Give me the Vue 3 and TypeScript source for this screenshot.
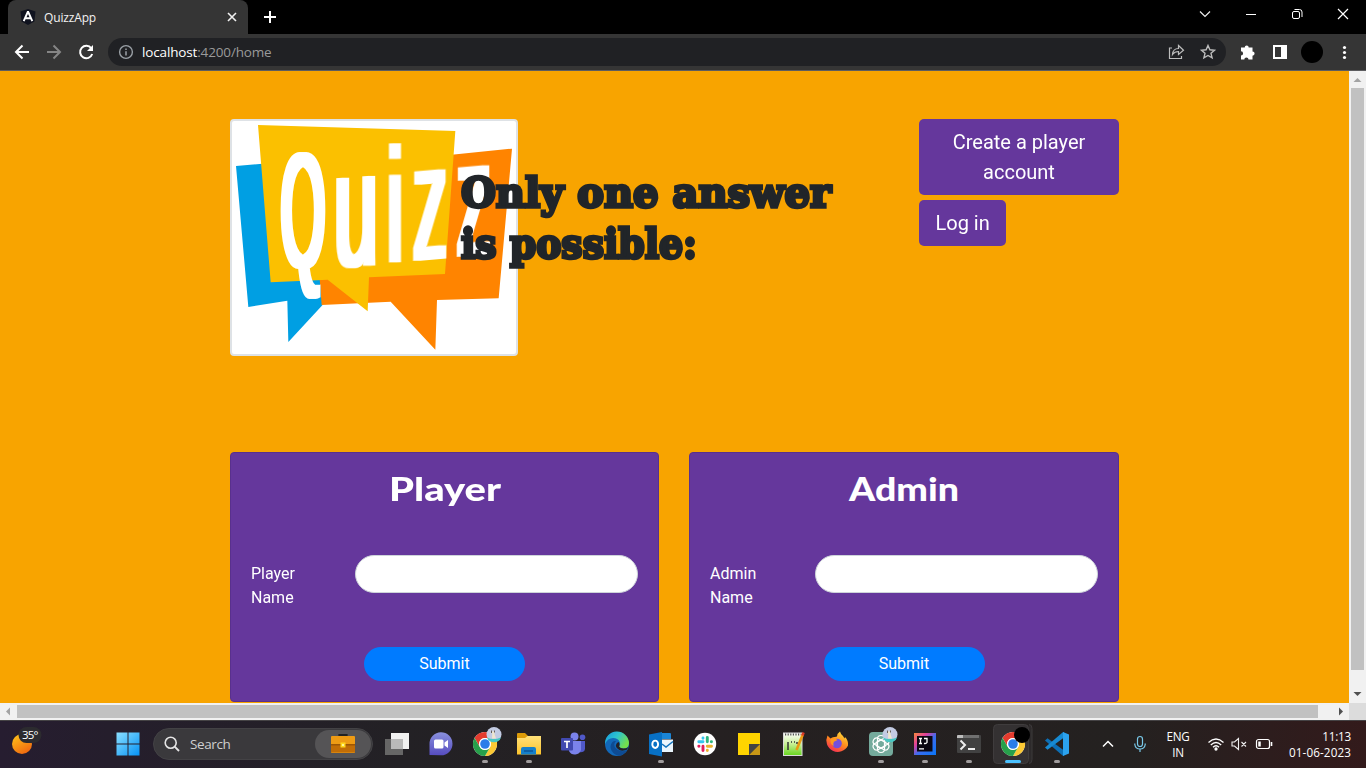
<script setup lang="ts">
interface LoginForm {
  title: string
  width: number
  label: string
}

interface LogoLetter {
  char: string
  x: number
  y: number
  size: number
  scale: number
  skew: number
}

const forms: LoginForm[] = [
  { title: 'Player', width: 112, label: 'Player Name' },
  { title: 'Admin', width: 110, label: 'Admin Name' },
]

const letters: LogoLetter[] = [
  { char: 'Q', x: 234, y: 466, size: 492, scale: 0.345, skew: 0 },
  { char: 'u', x: 393, y: 459, size: 498, scale: 0.47, skew: -4 },
  { char: 'i', x: 510, y: 449, size: 486, scale: 0.42, skew: -2 },
  { char: 'z', x: 615, y: 439, size: 496, scale: 0.4, skew: -5 },
  { char: 'z', x: 746, y: 427, size: 496, scale: 0.4, skew: -5 },
]

const headline = [
  { text: 'Only one answer', width: 370, y: 46.5 },
  { text: 'is possible:', width: 236, y: 97.5 },
]
</script>

<template>
  <div class="desktop">
    <header class="tabs">
      <div class="tab">
        <svg class="fav" width="16" height="16" viewBox="0 0 16 16">
          <path d="M8 0 15.5 2.600 14.400 12.500 8 16 1.600 12.500.5 2.600Z" fill="#10131f" />
          <path d="M8 2.500 3.700 12.200M8 2.500l4.300 9.700M5.500 9.200h5" stroke="#fff" stroke-width="1.900" fill="none" />
        </svg>
        <span class="tabname">QuizzApp</span>
        <svg class="close" width="10" height="10" viewBox="0 0 10 10"><path d="M1 1l8 8M9 1 1 9" stroke="#f1f1f1" stroke-width="1.600" /></svg>
      </div>
      <svg class="plus" width="12" height="12" viewBox="0 0 12 12"><path d="M6 0v12M0 6h12" stroke="#fff" stroke-width="2" /></svg>
      <div class="winbtns">
        <svg width="46" height="28" viewBox="0 0 46 28"><path d="M18 11.500l5 5 5-5" stroke="#eee" stroke-width="1.200" fill="none" /></svg>
        <svg width="46" height="28" viewBox="0 0 46 28"><path d="M18 14.500h10" stroke="#fff" /></svg>
        <svg width="46" height="28" viewBox="0 0 46 28" fill="none" stroke="#fff"><rect x="18.500" y="11.500" width="7" height="7" rx="1.500" /><path d="M20.500 9.500h5q2.500 0 2.500 2.500v5" /></svg>
        <svg width="46" height="28" viewBox="0 0 46 28"><path d="M18 9l10 10M28 9 18 19" stroke="#fff" stroke-width="1.200" /></svg>
      </div>
    </header>

    <nav class="toolbar">
      <svg class="nav" width="108" height="36" viewBox="0 0 108 36" fill="none" stroke-width="2">
        <path d="M29 18H16.500M22.500 11.500 16 18l6.500 6.500" stroke="#fff" />
        <path d="M47 18h12.500M53.500 11.500 60 18l-6.500 6.500" stroke="#858585" />
        <path d="M91.300 14.300A6.200 6.200 0 1 0 92.200 20" stroke="#fff" />
        <path d="M93 11v6h-6z" fill="#fff" />
      </svg>
      <div class="omni">
        <svg width="16" height="16" viewBox="0 0 16 16"><circle cx="8" cy="8" r="6.400" fill="none" stroke="#9aa0a6" stroke-width="1.400" /><path d="M8 7.200v4.200M8 4.400v1.600" stroke="#9aa0a6" stroke-width="1.500" /></svg>
        <span class="url">localhost<i>:4200/home</i></span>
        <svg class="omniright" width="56" height="28" viewBox="0 0 56 28" fill="none" stroke="#bdbdbd" stroke-width="1.200">
          <path d="M7 10H4.500v10.500h12V18M7.500 16.500c.3-4 2.500-6 6-6V7.500l5 4.700-5 4.300v-3c-2.500 0-4.500.8-6 3z" />
          <path d="M43 7.500l1.900 4.300 4.600.4-3.500 3.100 1.100 4.600-4.100-2.400-4.100 2.400 1.100-4.600-3.500-3.100 4.600-.4z" stroke-width="1.400" />
        </svg>
      </div>
      <svg class="exts" width="140" height="36" viewBox="0 0 140 36">
        <path d="M15 13.500h3.700a2 2 0 1 1 4 0H26.500v4a2.100 2.100 0 1 1 0 4.200V25.500h-4a2.100 2.100 0 0 0-4.200 0H15v-4a2.100 2.100 0 0 0 0-4.200z" fill="#fff" />
        <path d="M47 11h14v14H47zM49 13v10h6V13z" fill="#fff" fill-rule="evenodd" />
        <circle cx="86" cy="18" r="11" fill="#000" />
        <g fill="#fff"><circle cx="118.500" cy="13.500" r="1.600" /><circle cx="118.500" cy="18.500" r="1.600" /><circle cx="118.500" cy="23.500" r="1.600" /></g>
      </svg>
    </nav>

    <div class="window">
      <main class="page">
        <section class="hero">
          <svg class="logo" width="288" height="237" viewBox="21 27 852 699">
            <defs>
              <filter id="widen" x="-5%" y="-5%" width="110%" height="110%" color-interpolation-filters="sRGB"><feMorphology operator="dilate" radius="9 3" /></filter>
            </defs>
            <path d="M33 162 112 155 290 500 292 580 190 690 187 566 70 585Z" fill="#009fe3" />
            <path d="M680 128 861 110 821 559 636 564 631 713 497 569 290 579 284 500Z" fill="#ff8400" />
            <path d="M99 39 691 57 660 486 432 496 428 598 308 503 137 511Z" fill="#fbc000" />
            <g filter="url(#widen)">
              <text
                v-for="(l, i) in letters"
                :key="i"
                class="letter"
                text-anchor="middle"
                :font-size="l.size"
                :transform="`translate(${l.x} ${l.y}) skewY(${l.skew}) scale(${l.scale} 1)`"
              >{{ l.char }}</text>
            </g>
          </svg>
          <h1 class="headline">
            <svg width="400" height="120" viewBox="0 0 400 120">
              <text v-for="h in headline" :key="h.text" x="2" :y="h.y" :textLength="h.width" lengthAdjust="spacingAndGlyphs">{{ h.text }}</text>
            </svg>
          </h1>
          <div class="actions">
            <button>Create a player account</button>
            <button>Log in</button>
          </div>
        </section>

        <section class="cards">
          <form v-for="f in forms" :key="f.label" class="card" @submit.prevent>
            <h2>
              <svg width="120" height="48" viewBox="0 0 120 48">
                <text :x="60 - f.width / 2" y="32" :textLength="f.width" lengthAdjust="spacingAndGlyphs">{{ f.title }}</text>
              </svg>
            </h2>
            <div class="field">
              <label>{{ f.label }}</label>
              <input type="text" />
            </div>
            <button class="submit">Submit</button>
          </form>
        </section>
      </main>
      <div class="vbar">
        <svg width="17" height="17"><path d="M4.500 11 8.500 7l4 4z" fill="#a3a3a3" /></svg>
        <div class="vthumb"></div>
        <svg width="17" height="17"><path d="M4.500 6 8.500 10l4-4z" fill="#505050" /></svg>
      </div>
      <div class="hbar">
        <svg width="17" height="17"><path d="M10 4.500 6 8.500l4 4z" fill="#a3a3a3" /></svg>
        <div class="hthumb"></div>
        <svg width="17" height="17"><path d="M7 4.500 11 8.500l-4 4z" fill="#505050" /></svg>
      </div>
      <div class="corner"></div>
    </div>

    <footer class="taskbar">
      <svg width="0" height="0" class="defs">
        <defs>
          <linearGradient id="gSun" x1="0" y1="0" x2=".6" y2="1"><stop stop-color="#ffc91a" /><stop offset="1" stop-color="#f06a10" /></linearGradient>
          <linearGradient id="gWin" x1="0" y1="0" x2="1" y2="1"><stop stop-color="#8be0ff" /><stop offset="1" stop-color="#0592f5" /></linearGradient>
          <linearGradient id="gChat" x1="0" y1="0" x2="0" y2="1"><stop stop-color="#8990dd" /><stop offset="1" stop-color="#564cc0" /></linearGradient>
          <linearGradient id="gEdge" x1="0" y1="0" x2="1" y2=".5"><stop stop-color="#1597df" /><stop offset=".5" stop-color="#2cc3cf" /><stop offset="1" stop-color="#74df4c" /></linearGradient>
          <linearGradient id="gFold" x1="0" y1="0" x2="0" y2="1"><stop stop-color="#ffe17a" /><stop offset="1" stop-color="#fcc32c" /></linearGradient>
          <linearGradient id="gFox" x1=".8" y1="0" x2=".2" y2="1"><stop stop-color="#ffe23c" /><stop offset=".5" stop-color="#ff8a1c" /><stop offset="1" stop-color="#f5245a" /></linearGradient>
          <linearGradient id="gIj" x1="0" y1="0" x2="1" y2="1"><stop stop-color="#f98a3c" /><stop offset=".3" stop-color="#e0409a" /><stop offset=".55" stop-color="#3b6cf0" /><stop offset="1" stop-color="#0877f8" /></linearGradient>
          <linearGradient id="gNote" x1="0" y1="0" x2="0" y2="1"><stop stop-color="#fff" /><stop offset=".5" stop-color="#c5ef91" /><stop offset="1" stop-color="#65d51c" /></linearGradient>
          <g id="chrome">
            <circle cx="22" cy="24" r="12" fill="#fff" />
            <path d="M11.600 18A12 12 0 0 1 32.400 18H22a6 6 0 0 0-5.200 9z" fill="#e33b2e" />
            <path d="M32.400 18A12 12 0 0 1 22 36l5.200-9A6 6 0 0 0 22 18z" fill="#fcc934" />
            <path d="M11.600 18A12 12 0 0 0 22 36l5.200-9a6 6 0 0 1-10.400 0z" fill="#27a04b" />
            <circle cx="22" cy="24" r="6" fill="#fff" /><circle cx="22" cy="24" r="4.800" fill="#2b7de9" />
          </g>
          <g id="avatar">
            <circle cx="31" cy="14.500" r="7.500" fill="#c3cbe3" />
            <path d="M24 17.500q6 3 14 0a7.500 7.500 0 0 1-14 0z" fill="#47c7c2" />
            <path d="M28.700 10.500l1.300 1.500 1.500-1.500v3.500l1.500 4.500h-4l.3-4.500z" fill="#efe6cf" />
            <path d="M28.500 10.500v2.500M31.500 10.500v2" stroke="#5a534c" stroke-width=".9" />
          </g>
        </defs>
      </svg>

      <div class="weather">
        <svg width="50" height="48" viewBox="0 0 50 48">
          <circle cx="22" cy="24" r="10" fill="url(#gSun)" />
          <rect x="18.500" y="7" width="23" height="16" rx="8" fill="#2c2b2f" />
          <text x="22" y="19" textLength="16.500" class="deg">35°</text>
        </svg>
      </div>
      <svg class="start" width="24" height="24" viewBox="0 0 24 24"><path d="M.5.500h11v11H.5zM12.500.500h11v11h-11zM.5 12.500h11v11H.5zM12.500 12.500h11v11h-11z" fill="url(#gWin)" /></svg>
      <div class="search">
        <svg width="16" height="16" viewBox="0 0 16 16" fill="none" stroke="#e4e4e4"><circle cx="6.700" cy="6.700" r="5.500" stroke-width="1.600" /><path d="M10.700 10.700l4.300 4.300" stroke-width="1.900" /></svg>
        <span>Search</span>
        <div class="chip">
          <svg width="26" height="22" viewBox="0 0 26 22">
            <path d="M9.500 4V2h7v2" stroke="#222" stroke-width="2.200" fill="none" />
            <rect x="1" y="3" width="24" height="17" rx="1" fill="#ee9b14" /><path d="M1 12h24v7.500H1z" fill="#c16d06" /><path d="M1 11h24v1.500H1z" fill="#9d5604" />
            <rect x="10.500" y="9.500" width="5" height="5" fill="#ffd51e" /><rect x="12" y="11" width="2" height="2" fill="#fff59a" />
          </svg>
        </div>
      </div>

      <div class="apps">
        <svg viewBox="0 0 44 48"><rect x="16" y="13" width="18" height="16" fill="#f1f1f1" /><path d="M10 19h18v16H10z" fill="#666" /><path d="M16 19h12v10H16z" fill="#b9b9b9" /></svg>
        <svg viewBox="0 0 44 48"><path d="M10.500 35V24A11.500 11.500 0 1 1 22 35.300z" fill="url(#gChat)" /><rect x="15" y="19.500" width="9.500" height="9" rx="1.500" fill="#fff" /><path d="M25.500 22.500l3.500-2.500v8l-3.500-2.500z" fill="#fff" /></svg>
        <svg viewBox="0 0 44 48"><use href="#chrome" /><use href="#avatar" /><rect class="dot" x="19" y="40" width="6" height="3" rx="1.500" /></svg>
        <svg viewBox="0 0 44 48"><path d="M10 14q0-1 1-1h7l3 3v5H10z" fill="#dc9b08" /><path d="M10 18h8l2.500-2H34v18.500H10z" fill="url(#gFold)" /><path d="M14 34.500V29q0-2 2-2h11q2 0 2 2v5.500z" fill="#1580cb" /><path d="M17 31h9" stroke="#0c5598" stroke-width="1.500" /><rect class="dot" x="19" y="40" width="6" height="3" rx="1.500" /></svg>
        <svg viewBox="0 0 44 48"><circle cx="31.500" cy="17.300" r="2.800" fill="#5059c9" /><path d="M27 21h7v8q-1 4-6 3z" fill="#5059c9" /><circle cx="23.500" cy="16.500" r="4" fill="#7b83eb" /><path d="M18 21h12v9a6.500 6.500 0 0 1-12 1z" fill="#7b83eb" /><rect x="10" y="18" width="12" height="12.500" rx="1" fill="#4149b0" /><path d="M13 21.500h6M16 21.500v6.500" stroke="#fff" stroke-width="1.700" /></svg>
        <svg viewBox="0 0 44 48">
          <circle cx="22" cy="24" r="12" fill="#1268b9" />
          <path d="M10 24A12 12 0 0 1 34 23q0 5.500-5.500 5.500-4 0-4.500-2 2-2 .5-5Q23 18 18 18q-5.500 0-8 6z" fill="url(#gEdge)" />
          <path d="M17.500 22q-3.500 4-1 8.500Q19.500 35.500 24 35.800q5-.8 8.300-5.800-4 2-8 .5-5-2-5-6 0-2 1.700-3.500-2-.5-3.500 1z" fill="#0e4b93" />
          <path d="M24.200 26.500q1 2 4.300 2 3 0 4.500-1.500l-.7 2.500q-4.500 2-8 .5-3-1.500-3.500-4 .5-3.500 3-4 1.500 2.500.4 4.500z" fill="#242024" />
        </svg>
        <svg viewBox="0 0 44 48"><path d="M22 13h9q1 0 1 1v5H22z" fill="#1a85d6" /><path d="M21 19.500h13V32H21z" fill="#eaf5fd" /><path d="M23 24l4 3 7-5.500" fill="none" stroke="#1172bd" stroke-width="1.500" /><path d="M10 14.500 23 12v24.500L10 34z" fill="#0870c4" /><ellipse cx="16.200" cy="24.300" rx="2.900" ry="3.700" fill="none" stroke="#fff" stroke-width="1.900" /><rect class="dot" x="19" y="40" width="6" height="3" rx="1.500" /></svg>
        <svg viewBox="0 0 44 48"><circle cx="22" cy="24" r="11.200" fill="#fff" /><g stroke-width="2.900" stroke-linecap="round"><path d="M20 18v.2M15.800 21.800h4.200" stroke="#36c5f0" /><path d="M24.300 17.500v4.300M28.300 21.800h.2" stroke="#2eb67d" /><path d="M24.300 26.200h4.200M24.300 30.300v.2" stroke="#ecb22e" /><path d="M20 26.200v4.300M15.800 26.200h.2" stroke="#e01e5a" /></g></svg>
        <svg viewBox="0 0 44 48"><path d="M11 13h22v11L22 35H11z" fill="#ffd400" /><path d="M33 24v11H22z" fill="#c89716" /><path d="M22 24h11L22 35z" fill="#434343" /></svg>
        <svg viewBox="0 0 44 48"><rect x="12.500" y="13" width="18.500" height="22.500" fill="url(#gNote)" stroke="#d9d9d9" /><path d="M14 14.500h16" stroke="#555" stroke-width="2" stroke-dasharray="1.200 1.400" /><path d="M17 30v-8M20 22h1M23 22h1M26 22v2" stroke="#333" stroke-width="1.500" /><path d="M32 14 25.500 30" stroke="#e99b13" stroke-width="2.600" /><path d="M31.300 15.500 32.600 12.500" stroke="#d83a28" stroke-width="2.600" /></svg>
        <svg viewBox="0 0 44 48">
          <path d="M12.500 15.500l3 3q2-2 4.500-1.500l2-.5q0-3 3-5 .5 2.500 3 4.500l1.500 2.500.5-1.500q3.500 3.500 3 8.500A11.200 11.200 0 1 1 12.500 15.500z" fill="url(#gFox)" />
          <circle cx="22" cy="23.500" r="4.800" fill="#7550dc" />
          <path d="M15.500 19.500q4-2.500 7 .5l-3.500 1.800q-1.500 2 0 4-4-1-3.500-6.300z" fill="#ff981e" />
        </svg>
        <svg viewBox="0 0 44 48"><rect x="10" y="12" width="24" height="24" rx="4" fill="#74aa9c" /><g fill="none" stroke="#fff" stroke-width="1.200"><rect v-for="n in 3" :key="n" x="18.500" y="15.500" width="7" height="17" rx="3.500" :transform="`rotate(${n * 60} 22 24)`" /><path d="M22 19.500l4 2.300v4.500L22 28.500l-4-2.200v-4.500z" /></g><use href="#avatar" /><rect class="dot" x="19" y="40" width="6" height="3" rx="1.500" /></svg>
        <svg viewBox="0 0 44 48"><rect x="11" y="13" width="22" height="22" fill="url(#gIj)" /><rect x="14" y="16" width="15.500" height="15.500" fill="#0b0712" /><path d="M16 18.500h3M17.500 18.500v5M16 23.500h3M21 18.500h3v4q-1 1.500-3 .8M16 28.800h5" stroke="#fff" stroke-width="1.300" fill="none" /><rect class="dot" x="19" y="40" width="6" height="3" rx="1.500" /></svg>
        <svg viewBox="0 0 44 48"><rect x="10" y="15" width="24" height="18" rx="1" fill="#414141" /><path d="M10 18v-2q0-1 1-1h5v3z" fill="#bdbdbd" /><path d="M16 15h16v3H16z" fill="#707070" /><path d="M13.500 20.500l4.500 4.500-4.500 4.500M21 29h7" stroke="#eee" stroke-width="2" fill="none" /><rect class="dot" x="19" y="40" width="6" height="3" rx="1.500" /></svg>
        <svg viewBox="0 0 44 48"><path d="M38 4.500q3 0 3 4v31q0 4-3 4" fill="#2d2a2b" stroke="#3d3a3b" /><rect x="2.500" y="4.500" width="35" height="39" rx="4" fill="#343132" stroke="#3f3c3d" /><use href="#chrome" /><circle cx="31" cy="15" r="8" fill="#000" /><rect x="14" y="40" width="16" height="3" rx="1.500" fill="#4cc2ff" /></svg>
        <svg viewBox="0 0 44 48"><path d="M10 20.500l2.500-2.300L29 30.500v5.500l-1.500-.5z" fill="#0d6fb5" /><path d="M10 27.500l2.500 2.300L29 17.500V12l-1.500.5z" fill="#178ad2" /><path d="M28 12l6 2.500v19L28 36z" fill="#2ba2ee" /><rect class="dot" x="19" y="40" width="6" height="3" rx="1.500" /></svg>
      </div>

      <div class="tray">
        <svg width="20" height="20" viewBox="0 0 20 20"><path d="M5 12.500l5-5 5 5" fill="none" stroke="#fff" stroke-width="1.500" /></svg>
        <svg class="mic" width="20" height="20" viewBox="0 0 20 20" fill="none" stroke="#79c9e9" stroke-width="1.200"><rect x="7.500" y="2.500" width="5" height="10" rx="2.500" /><path d="M4.800 9.500v1q.6 4.500 5.200 4.500t5.200-4.500v-1M10 15v3" /></svg>
        <div class="lang"><span>ENG</span><span>IN</span></div>
        <svg class="wifi" width="20" height="20" viewBox="0 0 20 20" fill="none" stroke="#fff" stroke-width="1.300"><path d="M2.500 8.500q7.500-7 15 0M4.800 11q5.200-5 10.400 0M7 13.300q3-3 6 0" /><circle cx="10" cy="15" r="1" fill="#fff" /></svg>
        <svg class="spk" width="20" height="20" viewBox="0 0 20 20" fill="none" stroke="#eee" stroke-width="1.100"><path d="M3 8h2.500L9.500 4.500v11L5.500 12H3zM12.500 8l4.500 4.500M17 8l-4.500 4.500" /></svg>
        <svg class="bat" width="20" height="20" viewBox="0 0 20 20" fill="none" stroke="#fff" stroke-width="1.200"><rect x="2.500" y="5.500" width="13" height="9" rx="2" /><path d="M17.500 8v4" stroke-width="1.600" /><path d="M5.500 7.500v5" stroke-width="2.500" /></svg>
        <div class="clock"><span class="time">11:13</span><span>01-06-2023</span></div>
      </div>
    </footer>
  </div>
</template>

<style>
body { margin: 0; overflow: hidden; }
</style>

<style scoped>
.desktop { width: 1366px; height: 768px; display: flex; flex-direction: column; overflow: hidden; font-family: "Open Sans", "Noto Sans", sans-serif; }
.desktop * { box-sizing: border-box; }
svg { display: block; flex: none; }

.tabs { height: 34px; background: #000; display: flex; flex: none; }
.tab { width: 240px; height: 34px; margin-left: 8px; background: #353535; border-radius: 8px 8px 0 0; display: flex; align-items: center; padding: 0 11px 0 12px; }
.tabname { margin-left: 8px; color: #f2f2f2; font-size: 12px; letter-spacing: -.15px; flex: 1; }
.plus { margin: 11px 0 0 16px; }
.winbtns { display: flex; margin-left: auto; }

.toolbar { height: 37px; background: #353535; border-bottom: 1px solid #5c5c5f; display: flex; flex: none; }
.omni { width: 1118px; height: 28px; margin-top: 4px; border-radius: 14px; background: #202124; display: flex; align-items: center; padding-left: 10px; }
.url { margin-left: 8px; color: #fff; font-size: 13.500px; letter-spacing: -.15px; line-height: 28px; }
.url i { color: #9a9a9a; font-style: normal; }
.omniright { margin-left: auto; margin-right: 5px; }

.window { height: 649px; flex: none; display: grid; grid-template-columns: 1349px 17px; grid-template-rows: 632px 17px; }
.page { background: #f8a400; padding: 48px 230px 0; overflow: hidden; font-family: Roboto, sans-serif; }
.vbar { background: #f1f1f1; display: flex; flex-direction: column; }
.vthumb { width: 13px; height: 582px; margin: 0 2px auto; background: #c1c1c1; }
.hbar { background: #f1f1f1; display: flex; }
.hthumb { height: 13px; width: 1301px; margin: 2px auto 0 0; background: #c1c1c1; }
.corner { background: #dcdcdc; }

.hero { height: 333px; display: grid; grid-template-columns: 229px 460px 200px; }
.logo { background: #fff; border: 2px solid #dee2e6; border-radius: 4px; overflow: visible; }
.letter { font-family: "Liberation Sans", Arial, sans-serif; fill: #fff; }
.headline { margin: 41px 0 0; z-index: 1; height: 120px; }
.headline text { font-family: "DejaVu Serif", serif; font-weight: 700; font-size: 41.500px; fill: #212529; stroke: #212529; stroke-width: 3.400px; }
.actions { display: flex; flex-direction: column; align-items: flex-start; gap: 5px; }
.actions button { font: 400 20px/30px Roboto, sans-serif; color: #fff; background: #65379c; border: 0; border-radius: 5px; padding: 8px 16.500px; }
.actions button:first-child { width: 200px; }

.cards { display: grid; grid-template-columns: 429px 430px; gap: 30px; }
.card { height: 250px; background: #65379c; border: 1px solid #59308d; border-radius: 4px; padding: 16px 20px 0; display: flex; flex-direction: column; align-items: center; }
.card h2 { margin: 0; height: 48px; }
.card h2 text { font-family: Lato, sans-serif; font-weight: 900; font-size: 33px; fill: #fff; }
.field { align-self: stretch; margin-top: 38px; display: flex; justify-content: space-between; height: 92px; }
.field label { width: 60px; padding-top: 7px; color: #fff; font-size: 16px; line-height: 24px; }
.field input { width: 283px; height: 38px; border: 1px solid #ced4da; border-radius: 20px; background: #fff; padding: 0 12px; }
.submit { width: 161px; height: 34px; border: 0; border-radius: 17px; background: #007bff; color: #fff; font: 400 16px/34px Roboto, sans-serif; padding: 0; }

.taskbar { height: 48px; flex: none; display: flex; align-items: center; background: linear-gradient(90deg, #261d30 0, #251e2c 110px, #232125 400px, #252021 700px, #242120 1130px, #331a1b 1366px); box-shadow: inset 0 1px #454345; position: relative; }
.defs { position: absolute; }
.weather { width: 116px; }
.deg { font-size: 11.500px; fill: #fff; }
.search { width: 220px; height: 32px; margin-left: 13px; border-radius: 16px; background: #3a393c; border: 1px solid #434245; display: flex; align-items: center; padding-left: 10px; color: #cfcfcf; font-size: 13.500px; }
.search span { margin-left: 10px; letter-spacing: -.4px; }
.chip { width: 56px; height: 28px; border-radius: 14px; background: #555456; margin-left: auto; margin-right: 1px; display: flex; align-items: center; justify-content: center; }
.apps { display: grid; grid-template-columns: repeat(16, 44px); margin-left: 2px; }
.apps svg { width: 44px; height: 48px; }
.dot { fill: #a09c9d; }
.tray { display: flex; align-items: center; flex: 1; padding: 0 15px 0 19px; color: #fff; font-size: 11.700px; line-height: 16px; }
.mic { margin-left: 12px; }
.lang { width: 32px; margin-left: 12px; display: flex; flex-direction: column; text-align: center; letter-spacing: -.3px; }
.wifi { margin-left: 12px; }
.spk { margin-left: 3px; }
.bat { margin-left: 5px; }
.clock { margin-left: auto; display: flex; flex-direction: column; text-align: right; letter-spacing: .1px; }
.time { letter-spacing: -.2px; }
</style>
